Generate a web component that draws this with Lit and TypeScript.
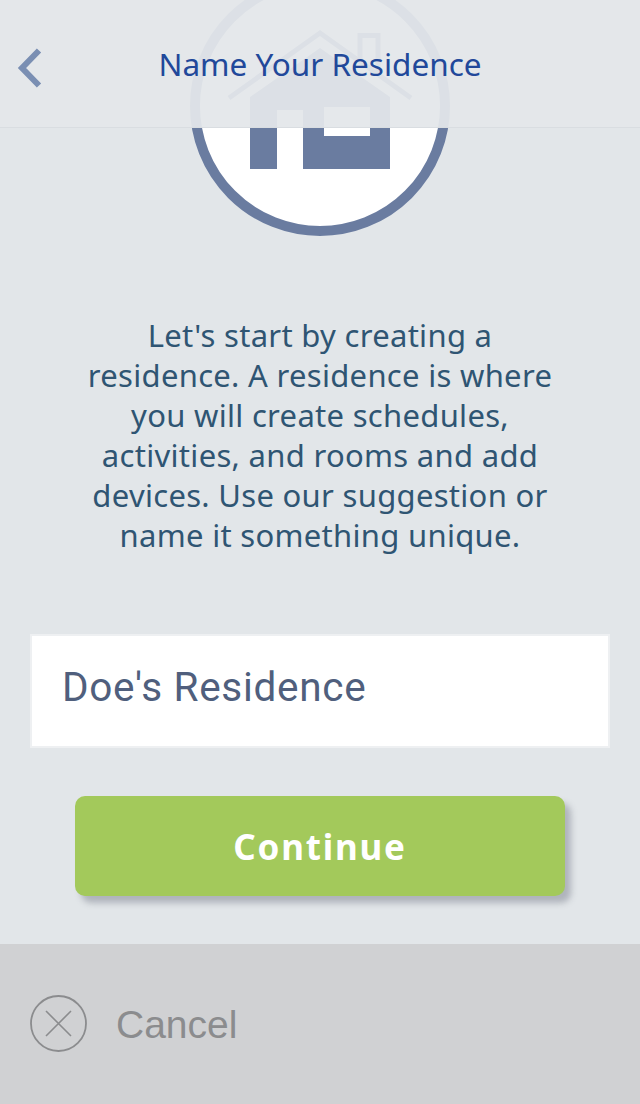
import { LitElement, html, css } from "lit";
import { customElement } from "lit/decorators.js";

@customElement("app-root")
export class AppRoot extends LitElement {
  static styles = css`
    :host { display: block; width: 640px; height: 1104px; position: relative; overflow: hidden; background: #e2e6e9; font-family: "Noto Sans", sans-serif; }
    .page { display: flex; flex-direction: column; height: 1104px; }
    .topbar { position: absolute; top: 0; left: 0; right: 0; height: 127px; background: rgba(227,231,234,.94); border-bottom: 1px solid #d9dde1; display: flex; align-items: center; justify-content: center; }
    .back { position: absolute; left: 17px; top: 47px; width: 26px; height: 42px; }
    .title { font-size: 31.5px; color: #21489a; letter-spacing: 0; line-height: 40px; }
    .hero { display: block; width: 260px; height: 236px; margin: 0 auto; flex: none; }
    .intro { margin: 79px 0 0; height: 241px; text-align: center; font-size: 31px; line-height: 40px; color: #2f5573; letter-spacing: 0.3px; }
    .field { margin: 78px 30px 0; height: 114px; box-sizing: border-box; background: #fff; border: 2px solid #eef0f2; padding-left: 30px; display: flex; align-items: center; font-family: Roboto, sans-serif; font-size: 40.5px; letter-spacing: 0.7px; color: #505f7d; font-weight: 400; padding-bottom: 8px; }
    .continue { margin: 48px 75px 0; height: 100px; border-radius: 10px; background: #a3c95b; box-shadow: 6px 7px 6px rgba(100,105,120,.4); display: flex; align-items: center; justify-content: center; color: #fff; font-size: 35px; font-weight: 700; letter-spacing: 1.8px; }
    .footer { margin-top: 48px; height: 160px; background: #d0d1d3; display: flex; align-items: center; gap: 29px; padding: 0 30px 1px; box-sizing: border-box; }
    .x { width: 57px; height: 57px; flex: none; }
    .cancel { font-family: "Liberation Sans", sans-serif; font-size: 39px; color: #8b8c8e; position: relative; top: 1.5px; }
  `;
  render() {
    return html`<div class="page">
      <svg class="hero" viewBox="190 0 260 236" aria-hidden="true">
        <circle cx="320" cy="106" r="125" fill="#fff" stroke="#6a7ca0" stroke-width="10"/>
        <path d="M229 98 L320 33 L411 98" fill="none" stroke="#6a7ca0" stroke-width="5"/>
        <path d="M360 62 V35.5 H378 V76" fill="none" stroke="#6a7ca0" stroke-width="5"/>
        <path fill-rule="evenodd" fill="#6a7ca0" d="M250 97 L320 48 L390 97 V169 H303 V110 H277 V169 H250 Z M324 107 V136 H370 V107 Z"/>
      </svg>
      <p class="intro">Let's start by creating a<br>residence. A residence is where<br>you will create schedules,<br>activities, and rooms and add<br>devices. Use our suggestion or<br>name it something unique.</p>
      <div class="field">Doe's Residence</div>
      <div class="continue">Continue</div>
      <div class="footer">
        <svg class="x" viewBox="0 0 57 57" aria-hidden="true"><circle cx="28.5" cy="28.5" r="27.5" fill="none" stroke="#8b8c8e" stroke-width="1.8"/><path d="M16 16 L41 41 M41 16 L16 41" stroke="#8b8c8e" stroke-width="1.6" fill="none"/></svg>
        <span class="cancel">Cancel</span>
      </div>
    </div>
    <div class="topbar">
      <svg class="back" viewBox="0 0 26 42" aria-hidden="true"><path d="M22 3.5 L5 21 L22 38.5" fill="none" stroke="#7a8fb3" stroke-width="6"/></svg>
      <span class="title">Name Your Residence</span>
    </div>`;
  }
}
